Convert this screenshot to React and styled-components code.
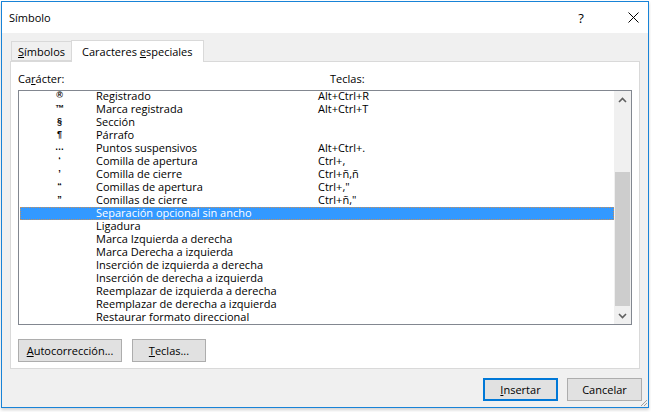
import React from "react";
import styled, { createGlobalStyle } from "styled-components";

const GlobalStyle = createGlobalStyle`
  html, body { margin: 0; padding: 0; background: #ffffff; }
  body { font-family: "Open Sans", "Noto Sans", sans-serif; font-size: 11px; color: #000; }
  #root { padding: 1px 2px 4px 1px; width: max-content; }
`;

const WindowWrap = styled.div`
  position: relative;
`;

const Window = styled.div`
  width: 646px;
  height: 405px;
  border: 1px solid #1883d7;
  background: #f0f0f0;
  display: flex;
  flex-direction: column;
  box-shadow: 0 2px 3px rgba(0,0,0,0.18);
`;

const TitleBar = styled.div`
  height: 31px;
  background: #ffffff;
  display: flex;
  align-items: center;
  padding: 0 0 0 7px;
`;

const Title = styled.div`
  flex: 1;
  font-size: 11px;
  line-height: 16px;
  padding-top: 1px;
`;

const TitleButton = styled.div`
  width: ${p => p.w}px;
  margin-right: ${p => p.mr || 0}px;
  height: 30px;
  display: flex;
  align-items: center;
  justify-content: center;
  font-size: 13px;
  color: #000;
`;

const Body = styled.div`
  flex: 1;
  display: flex;
  flex-direction: column;
  padding: 7px 8px 0 8px;
`;

const TabStrip = styled.div`
  display: flex;
  align-items: flex-end;
  height: 21px;
  padding-left: 1px;
  position: relative;
  z-index: 1;
`;

const Tab = styled.div`
  box-sizing: border-box;
  height: ${p => (p.active ? 22 : 20)}px;
  margin-bottom: ${p => (p.active ? -1 : 0)}px;
  padding: 0 ${p => (p.active ? 10 : 6)}px;
  padding-top: ${p => (p.active ? 0 : 1)}px;
  display: flex;
  align-items: center;
  background: ${p => (p.active ? "#ffffff" : "#f0f0f0")};
  border: 1px solid #d9d9d9;
  border-bottom: ${p => (p.active ? "none" : "1px solid #d9d9d9")};
  border-right: ${p => (p.active ? "1px solid #d9d9d9" : "none")};
  line-height: 15px;
`;

const U = styled.span`
  text-decoration: underline;
  text-underline-offset: 1px;
`;

const Panel = styled.div`
  box-sizing: border-box;
  height: 308px;
  background: #ffffff;
  border: 1px solid #d9d9d9;
  padding: 9px 6px 0 7px;
  display: flex;
  flex-direction: column;
`;

const HeaderRow = styled.div`
  display: grid;
  grid-template-columns: 312px 1fr;
  height: 16px;
  line-height: 16px;
  margin-bottom: 3px;
`;

const HeaderCell = styled.div``;

const ListBox = styled.div`
  box-sizing: border-box;
  width: 614px;
  height: 235px;
  border: 1px solid #828790;
  display: flex;
  background: #fff;
`;

const Rows = styled.div`
  flex: 1;
  padding-left: 1px;
  margin-top: -1px;
  overflow: hidden;
`;

const ListRow = styled.div`
  display: grid;
  grid-template-columns: 76px 222px 1fr;
  height: 13px;
  box-sizing: border-box;
  line-height: 11px;
  padding-bottom: 2px;
  white-space: nowrap;
  background: ${p => (p.sel ? "#3399ff" : "transparent")};
  color: ${p => (p.sel ? "#ffffff" : "#000")};
  outline: ${p => (p.sel ? "1px dotted #c8905a" : "none")};
  outline-offset: -1px;
`;

const SymCell = styled.div`
  text-align: center;
  padding-left: 3px;
  font-family: "Liberation Sans", sans-serif;
  font-size: 9px;
  font-weight: bold;
`;

const Cell = styled.div``;

const ScrollBar = styled.div`
  width: 17px;
  background: #f0f0f0;
  display: flex;
  flex-direction: column;
`;

const ArrowBtn = styled.div`
  height: 17px;
  display: flex;
  align-items: center;
  justify-content: center;
`;

const Track = styled.div`
  flex: 1;
  display: flex;
  flex-direction: column;
  padding: 64px 1px 0 1px;
`;

const Thumb = styled.div`
  height: 134px;
  background: #cdcdcd;
`;

const ButtonRow = styled.div`
  display: flex;
  gap: 10px;
  margin-top: 14px;
`;

const Button = styled.div`
  box-sizing: border-box;
  width: ${p => p.w}px;
  height: 23px;
  background: #e1e1e1;
  border: ${p => (p.primary ? "2px solid #0078d7" : "1px solid #adadad")};
  display: flex;
  align-items: center;
  justify-content: center;
  line-height: 15px;
  padding-bottom: 1px;
`;

const Footer = styled.div`
  display: flex;
  justify-content: flex-end;
  gap: 9px;
  margin-top: 9px;
  margin-right: -2px;
`;

const Grip = styled.svg`
  position: absolute;
  right: 1px;
  bottom: 1px;
`;

const rows = [
  ["®", "Registrado", "Alt+Ctrl+R"],
  ["™", "Marca registrada", "Alt+Ctrl+T"],
  ["§", "Sección", ""],
  ["¶", "Párrafo", ""],
  ["…", "Puntos suspensivos", "Alt+Ctrl+."],
  ["‘", "Comilla de apertura", "Ctrl+,"],
  ["’", "Comilla de cierre", "Ctrl+ñ,ñ"],
  ["“", "Comillas de apertura", "Ctrl+,\""],
  ["”", "Comillas de cierre", "Ctrl+ñ,\""],
  ["", "Separación opcional sin ancho", "", true],
  ["", "Ligadura", ""],
  ["", "Marca Izquierda a derecha", ""],
  ["", "Marca Derecha a izquierda", ""],
  ["", "Inserción de izquierda a derecha", ""],
  ["", "Inserción de derecha a izquierda", ""],
  ["", "Reemplazar de izquierda a derecha", ""],
  ["", "Reemplazar de derecha a izquierda", ""],
  ["", "Restaurar formato direccional", ""],
];

export default function App() {
  return (
    <>
      <GlobalStyle />
      <WindowWrap>
        <Window>
          <TitleBar>
            <Title>Símbolo</Title>
            <TitleButton w={46} mr={15}>?</TitleButton>
            <TitleButton w={29}>
              <svg width="11" height="11" viewBox="0 0 11 11">
                <path d="M0.5 0.5 L10.5 10.5 M10.5 0.5 L0.5 10.5" stroke="#000" strokeWidth="1" />
              </svg>
            </TitleButton>
          </TitleBar>
          <Body>
            <TabStrip>
              <Tab><span><U>S</U>ímbolos</span></Tab>
              <Tab active><span>Caracteres <U>e</U>speciales</span></Tab>
            </TabStrip>
            <Panel>
              <HeaderRow>
                <HeaderCell>Ca<U>r</U>ácter:</HeaderCell>
                <HeaderCell>Teclas:</HeaderCell>
              </HeaderRow>
              <ListBox>
                <Rows>
                  {rows.map(([s, n, k, sel], i) => (
                    <ListRow key={i} sel={sel}>
                      <SymCell>{s}</SymCell>
                      <Cell>{n}</Cell>
                      <Cell>{k}</Cell>
                    </ListRow>
                  ))}
                </Rows>
                <ScrollBar>
                  <ArrowBtn>
                    <svg width="9" height="6" viewBox="0 0 9 6">
                      <path d="M1 5 L4.5 1.5 L8 5" fill="none" stroke="#606060" strokeWidth="1.6" />
                    </svg>
                  </ArrowBtn>
                  <Track>
                    <Thumb />
                  </Track>
                  <ArrowBtn>
                    <svg width="9" height="6" viewBox="0 0 9 6">
                      <path d="M1 1 L4.5 4.5 L8 1" fill="none" stroke="#606060" strokeWidth="1.6" />
                    </svg>
                  </ArrowBtn>
                </ScrollBar>
              </ListBox>
              <ButtonRow>
                <Button w={104}><span><U>A</U>utocorrección...</span></Button>
                <Button w={74}><span><U>T</U>eclas...</span></Button>
              </ButtonRow>
            </Panel>
            <Footer>
              <Button w={75} primary><span><U>I</U>nsertar</span></Button>
              <Button w={75}>Cancelar</Button>
            </Footer>
          </Body>
        </Window>
        <Grip width="9" height="9" viewBox="0 0 9 9">
          <path d="M8 2 L2 8 M8 5 L5 8" stroke="#a0a0a0" strokeWidth="1" />
        </Grip>
      </WindowWrap>
    </>
  );
}
